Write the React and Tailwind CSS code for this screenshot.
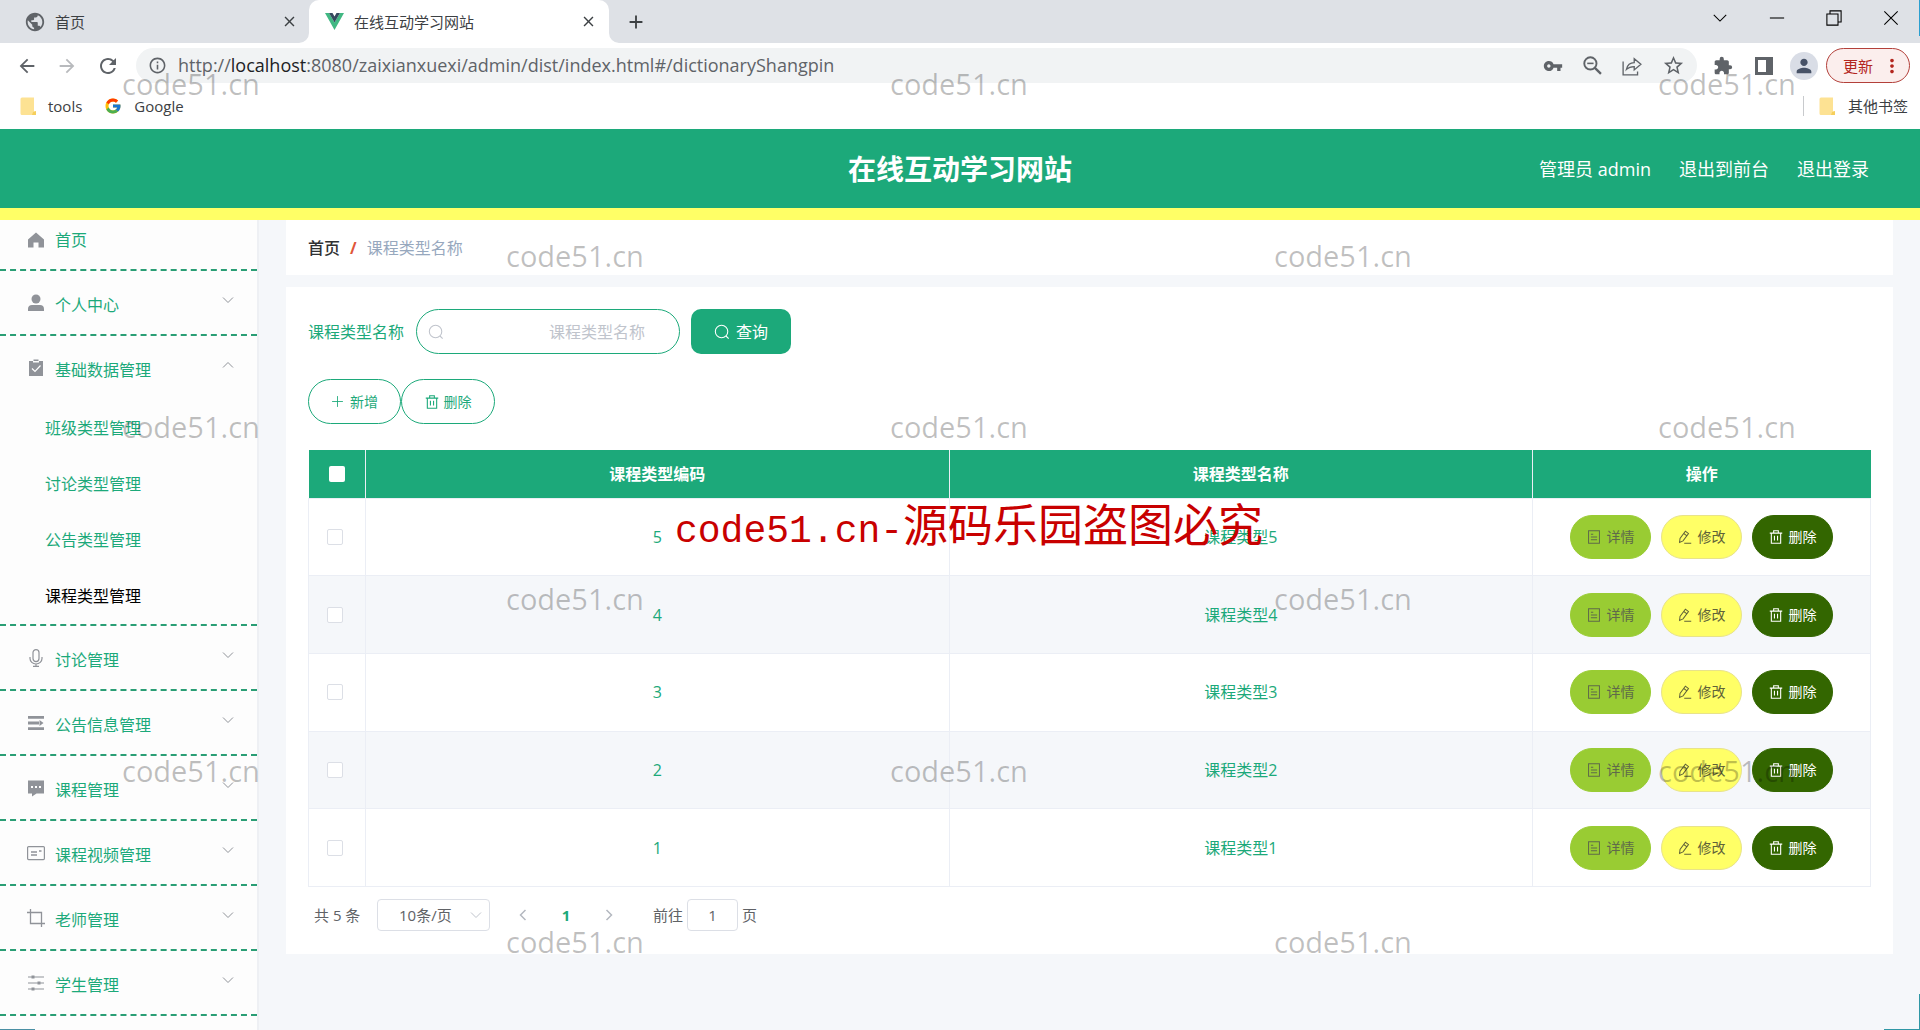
import React from 'react';
import {
  MdPublic, MdArrowBack, MdArrowForward, MdRefresh, MdInfoOutline, MdVpnKey,
  MdStarBorder, MdExtension, MdPerson, MdMoreVert, MdClose, MdAdd,
} from 'react-icons/md';
import { FcGoogle } from 'react-icons/fc';

const Svg = ({ size = 18, children, className = '' }) => (
  <svg width={size} height={size} viewBox="0 0 18 18" fill="none" stroke="currentColor" strokeWidth="1.2" className={`shrink-0 ${className}`}>
    {children}
  </svg>
);

// Sidebar icons
const icons = {
  home: <path d="M9 1.500 1 8.500v8h5.500v-5h5v5H17v-8z" fill="currentColor" stroke="none" />,
  user: (
    <g fill="currentColor" stroke="none">
      <circle cx="9" cy="5" r="4.500" />
      <path d="M1 17v-2c0-2.500 1.500-4 4-4h8c2.500 0 4 1.500 4 4v2z" />
    </g>
  ),
  claim: (
    <>
      <path d="M2 2h4v1.500h6V2h4v15H2zM6.500.5h5V2h-5z" fill="currentColor" stroke="none" />
      <path d="M5 9.500l3 3 5.500-6" stroke="white" />
    </>
  ),
  mic: (
    <>
      <rect x="6" y="0.600" width="6" height="12" rx="3" />
      <path d="M3 8v1.500a6 5.500 0 0 0 12 0V8M9 15v2.500M6 17.400h6" />
    </>
  ),
  unfold: (
    <path d="M1 2h16v2.800H1zM1 7.600h11v2.800H1zM1 13.200h16V16H1zM12.500 6l4 3-4 3z" fill="currentColor" stroke="none" />
  ),
  comment: (
    <>
      <path d="M1 1.500h16v13H9.500L5 17.500v-3H1z" fill="currentColor" stroke="none" />
      <path d="M4 8h2M8 8h2M12 8h2" stroke="white" strokeWidth="2" />
    </>
  ),
  postcard: (
    <>
      <rect x="0.600" y="2.600" width="16.800" height="13" rx="1" />
      <path d="M4 8h6M4 11h6M12 7h2.500" strokeWidth="1.500" />
    </>
  ),
  crop: <path d="M3.500 0v14.500H18M0 3.500h14.500V18" strokeWidth="1.300" />,
  operation: (
    <>
      <path d="M1 3h16M1 9h16M1 15h16" />
      <path d="M6 1.500v3M12 7.500v3M6 13.500v3" strokeWidth="3" />
    </>
  ),
};

const menu = [
  { label: '个人中心', icon: 'user' },
  {
    label: '基础数据管理',
    icon: 'claim',
    children: ['班级类型管理', '讨论类型管理', '公告类型管理', '课程类型管理'],
  },
  { label: '讨论管理', icon: 'mic' },
  { label: '公告信息管理', icon: 'unfold' },
  { label: '课程管理', icon: 'comment' },
  { label: '课程视频管理', icon: 'postcard' },
  { label: '老师管理', icon: 'crop' },
  { label: '学生管理', icon: 'operation' },
];

const rows = [5, 4, 3, 2, 1];

const Chevron = ({ up, className = '' }) => (
  <svg width="12" height="8" viewBox="0 0 12 8" fill="none" stroke="currentColor" className={className}>
    <path d={up ? 'M1 6.500l5-5 5 5' : 'M1 1.500l5 5 5-5'} />
  </svg>
);

const SearchIcon = () => (
  <Svg size={16}>
    <circle cx="8.500" cy="8.500" r="7" />
    <path d="M13.500 13.500l3 3" />
  </Svg>
);

const TrashIcon = () => (
  <Svg size={14}>
    <path d="M1 4h16M3 4v13h12V4M6 4V1h6v3M7 7.500v6M11 7.500v6" strokeWidth="1.400" />
  </Svg>
);

const DocIcon = () => (
  <Svg size={14}>
    <path d="M2 1h14v16H2zM5 5.500h3M5 9h8M5 12.500h8" strokeWidth="1.300" />
  </Svg>
);

const EditIcon = () => (
  <Svg size={14}>
    <path d="M2 16l.6-5L9.500 1.500l4 3L6.500 14zM7.500 4.500l4 3M8 17h9" strokeWidth="1.300" />
  </Svg>
);

const FolderIcon = () => (
  <svg width="17" height="19" viewBox="0 0 17 19" className="shrink-0">
    <path d="M2 .5h12v14h2v3.500H2a1.500 1.500 0 0 1-1.500-1.500V2A1.500 1.500 0 0 1 2 .5" fill="#fde293" />
    <path d="M13 15l3-1v4h-4z" fill="#f6cf5c" />
  </svg>
);

const BrowserChrome = () => (
  <div className="bg-white text-[#3c4043]">
    {/* Tab strip */}
    <div className="flex h-[43px] items-stretch bg-[#dee1e6]">
      <div className="flex w-[309px] items-center pl-6 pr-[11px]">
        <MdPublic size={22} className="text-[#5f6368]" />
        <span className="ml-[9px] flex-1 text-[15px]">首页</span>
        <button aria-label="关闭首页"><MdClose size={17} /></button>
      </div>
      <div className="relative flex w-[300px] items-center rounded-t-[10px] bg-white pl-4 pr-3">
        <svg width="10" height="10" className="absolute -left-[10px] bottom-0"><path d="M10 0v10H0A10 10 0 0 0 10 0" fill="white" /></svg>
        <svg width="10" height="10" className="absolute -right-[10px] bottom-0"><path d="M0 0v10h10A10 10 0 0 1 0 0" fill="white" /></svg>
        <svg width="19" height="17" viewBox="0 0 19 17">
          <path d="M0 0h4l5.500 9.500L15 0h4L9.500 17z" fill="#41b883" />
          <path d="M4 0h3.500l2 3.500 2-3.500H15L9.500 9.500z" fill="#35495e" />
        </svg>
        <span className="ml-[10px] flex-1 text-[15px]">在线互动学习网站</span>
        <button aria-label="关闭标签页"><MdClose size={17} /></button>
      </div>
      <button aria-label="新标签页" className="ml-4 flex items-center"><MdAdd size={22} /></button>
      <div className="ml-auto flex items-start gap-[41px] pr-[21px] pt-[10px] text-black">
        <Svg size={16}><path d="M2 5.500l7 7 7-7" /></Svg>
        <Svg size={16}><path d="M1 9h16" /></Svg>
        <Svg size={16}><path d="M1 4.500h12.500V17H1zM4.500 4.500V1H17v12.500h-3.500" /></Svg>
        <Svg size={16}><path d="M1.500 1.500l15 15M16.500 1.500l-15 15" /></Svg>
      </div>
    </div>

    {/* Address bar */}
    <div className="flex h-[45px] items-center pl-4 pr-[10px] text-[#5f6368]">
      <div className="flex w-[120px] shrink-0 items-center gap-[18px]">
        <button aria-label="后退"><MdArrowBack size={22} /></button>
        <button aria-label="前进" className="text-[#b8babd]"><MdArrowForward size={22} /></button>
        <button aria-label="刷新"><MdRefresh size={24} /></button>
      </div>
      <div className="flex h-[35px] flex-1 items-center rounded-full bg-[#f1f3f4] pl-3 pr-3">
        <MdInfoOutline size={19} />
        <p className="ml-[11px] flex-1 pb-[2px] text-[18px] leading-6">
          http://<span className="text-[#202124]">localhost</span>:8080/zaixianxuexi/admin/dist/index.html#/dictionaryShangpin
        </p>
        <div className="flex items-center gap-5">
          <MdVpnKey size={20} />
          <Svg size={19}>
            <circle cx="7" cy="7" r="5.800" strokeWidth="1.800" />
            <path d="M4 7h6" strokeWidth="1.500" />
            <path d="M11 11l6 6" strokeWidth="2.200" />
          </Svg>
          <Svg size={20}>
            <path d="M1 5v12h13v-3M4 12c1-4.500 4-6 7-6V2.500l6 5-6 5V9.500c-3 0-5 .5-7 2.500z" />
          </Svg>
          <MdStarBorder size={23} />
        </div>
      </div>
      <div className="flex items-center">
        <MdExtension size={20} className="ml-4" />
        <svg width="18" height="18" className="ml-[22px]"><path d="M1.500 1.500h15v15h-15z" fill="none" stroke="currentColor" strokeWidth="3" /><path d="M11 1h6v16h-6z" fill="currentColor" /></svg>
        <span className="ml-[17px] flex size-7 items-center justify-center rounded-full bg-[#d9dde6] text-[#475267]"><MdPerson size={22} /></span>
        <button className="ml-2 flex h-[35px] w-[84px] items-center rounded-full border border-[#b3403a] bg-[#fbeeed] pl-4 text-[15px] text-[#b3261e]">
          更新
          <MdMoreVert size={22} className="ml-2" />
        </button>
      </div>
    </div>

    {/* Bookmarks */}
    <div className="flex h-[41px] items-center pb-[5px] pl-5 pr-3 text-[15px]">
      <FolderIcon />
      <a href="#tools" className="ml-[11px]">tools</a>
      <FcGoogle size={18} className="ml-[22px]" />
      <a href="#google" className="ml-3">Google</a>
      <span className="ml-auto h-5 w-px bg-[#c8cacd]" />
      <span className="ml-[15px] flex items-center gap-3"><FolderIcon /><a href="#other">其他书签</a></span>
    </div>
  </div>
);

const MenuRow = ({ label, icon, open }) => (
  <a href="#menu" className="flex h-[63px] items-center pl-[27px] pr-[23px]">
    <Svg className="text-[#909399]">{icons[icon]}</Svg>
    <span className="ml-[10px] flex-1 pt-1 leading-6">{label}</span>
    <Chevron up={open} className="mb-[6px] text-[#909399]" />
  </a>
);

const Sidebar = () => (
  <nav className="w-[259px] shrink-0 border-r-2 border-[#eef0f4] bg-[#fdfdfd] text-[#1ca97a]">
    <a href="#home" className="flex h-[51px] items-start border-b-2 border-dashed border-[#2a9e75] pl-[27px] pt-2">
      <Svg className="mt-[3px] text-[#909399]">{icons.home}</Svg>
      <span className="ml-[10px] leading-6">首页</span>
    </a>
    {menu.map((item) => (
      <div key={item.label} className="border-b-2 border-dashed border-[#2a9e75]">
        <MenuRow label={item.label} icon={item.icon} open={!!item.children} />
        {item.children && (
          <ul className="pt-px">
            {item.children.map((child) => (
              <li key={child}>
                <a href="#sub" className={`flex h-14 items-center pl-[45px] ${child === '课程类型管理' ? 'text-black' : ''}`}>{child}</a>
              </li>
            ))}
          </ul>
        )}
      </div>
    ))}
  </nav>
);

const ActionButton = ({ className, children }) => (
  <button className={`flex h-11 w-[81px] items-center justify-center gap-[6px] rounded-full border text-[14px] leading-5 ${className}`}>
    {children}
  </button>
);

const DataTable = () => (
  <table className="mt-[26px] h-[437px] w-full table-fixed border-collapse text-center text-[#1ca97a]">
    <thead>
      <tr className="h-12 bg-[#1ca97a] text-white">
        <th className="w-[57px] border-r border-[#ebeef5]">
          <input type="checkbox" aria-label="全选" className="block mx-auto size-4 appearance-none rounded-[2px] bg-white" />
        </th>
        <th className="border-r border-[#ebeef5] font-bold">课程类型编码</th>
        <th className="border-r border-[#ebeef5] font-bold">课程类型名称</th>
        <th className="w-[338px] font-bold">操作</th>
      </tr>
    </thead>
    <tbody>
      {rows.map((n) => (
        <tr key={n} className="even:bg-[#f5f7fa]">
          <td className="border border-[#ebeef5] pr-1">
            <input type="checkbox" aria-label={`选择 ${n}`} className="block mx-auto size-4 appearance-none rounded-[2px] border border-[#dcdfe6] bg-white" />
          </td>
          <td className="border border-[#ebeef5]">{n}</td>
          <td className="border border-[#ebeef5]">课程类型{n}</td>
          <td className="border border-[#ebeef5]">
            <div className="flex justify-center gap-[10px]">
              <ActionButton className="border-[#99cc33] bg-[#99cc33] text-[#5f6a4a]"><DocIcon />详情</ActionButton>
              <ActionButton className="border-[#e8e38a] bg-[#ffff66] text-[#606239]"><EditIcon />修改</ActionButton>
              <ActionButton className="border-[#336600] bg-[#336600] text-white"><TrashIcon />删除</ActionButton>
            </div>
          </td>
        </tr>
      ))}
    </tbody>
  </table>
);

const Pagination = () => (
  <div className="mt-3 flex h-8 items-center pl-[6px] text-[15px] text-[#606266]">
    <span className="w-[63px]">共 5 条</span>
    <div className="relative">
      <select aria-label="每页条数" className="h-8 w-[113px] appearance-none rounded-[4px] border border-[#dcdfe6] bg-white pl-[21px]">
        <option>10条/页</option>
      </select>
      <Chevron className="pointer-events-none absolute right-2 top-3 text-[#c0c4cc]" />
    </div>
    <button aria-label="上一页" className="ml-6 text-[#b4b8c0]"><Svg><path d="M11.500 4l-5 5 5 5" strokeWidth="1.500" /></Svg></button>
    <button className="w-[68px] text-center font-bold text-[#1ca97a]">1</button>
    <button aria-label="下一页" className="text-[#b4b8c0]"><Svg><path d="M6.500 4l5 5-5 5" strokeWidth="1.500" /></Svg></button>
    <label className="ml-[35px] flex items-center gap-1">
      前往
      <input type="text" defaultValue="1" className="h-8 w-[51px] rounded-[4px] border border-[#dcdfe6] text-center" />
      <span>页</span>
    </label>
  </div>
);

const marks = [
  'left-[122px] top-[64px]', 'left-[890px] top-[64px]', 'left-[1658px] top-[64px]',
  'left-[506px] top-[236px]', 'left-[1274px] top-[236px]',
  'left-[122px] top-[407px]', 'left-[890px] top-[407px]', 'left-[1658px] top-[407px]',
  'left-[506px] top-[579px]', 'left-[1274px] top-[579px]',
  'left-[122px] top-[751px]', 'left-[890px] top-[751px]', 'left-[1658px] top-[751px]',
  'left-[506px] top-[922px]', 'left-[1274px] top-[922px]',
];

const Watermarks = () => (
  <div className="pointer-events-none absolute inset-0 overflow-hidden">
    {marks.map((pos) => (
      <span key={pos} className={`absolute text-[29px] leading-10 text-black/25 ${pos}`}>code51.cn</span>
    ))}
    <p className="absolute left-[675px] top-[500px] flex items-baseline whitespace-pre text-[45px] leading-[50px] text-[#c80000]">
      <span className="font-['Liberation_Mono',monospace] text-[38px]">code51.cn-</span>
      源码乐园盗图必究
    </p>
    {/* Desktop showing past the window edges */}
    <span className="absolute right-0 top-0 h-9 w-px bg-[#2b9fd0]" />
    <span className="absolute bottom-0 left-0 h-px w-[35px] bg-[#4a90a4]" />
    <span className="absolute bottom-0 right-0 h-9 w-9 border-b border-r border-[#2f97a5]" />
  </div>
);

export default function App() {
  return (
    <div className="relative flex min-h-screen flex-col bg-[#f5f7fa] font-['Open_Sans','Noto_Sans_CJK_SC',sans-serif] text-[16px] leading-6">
      <BrowserChrome />

      <header className="grid h-[91px] grid-cols-[1fr_auto_1fr] items-center border-b-[12px] border-[#ffff66] bg-[#1ca97a] text-white">
        <h1 className="col-start-2 text-[28px] font-bold leading-10">在线互动学习网站</h1>
        <div className="flex justify-end gap-7 pr-[51px] text-[18px]">
          <span>管理员 admin</span>
          <a href="#front">退出到前台</a>
          <a href="#logout">退出登录</a>
        </div>
      </header>

      <div className="flex flex-1">
        <Sidebar />
        <main className="min-w-0 flex-1 pl-[27px] pr-[27px]">
          <div className="flex h-[55px] items-center bg-white pl-[22px]">
            <a href="#home" className="font-medium text-[#303133]">首页</a>
            <span className="mx-[10px] font-bold text-[#e0563a]">/</span>
            <span className="text-[#97a8be]">课程类型名称</span>
          </div>

          <section className="mt-3 bg-white px-[22px] pb-[23px] pt-[22px]">
            <form className="flex items-center" onSubmit={(e) => e.preventDefault()}>
              <label htmlFor="typeName" className="text-[#1ca97a]">课程类型名称</label>
              <div className="relative ml-3 flex items-center">
                <span className="absolute left-3 text-[#c0c4cc]"><SearchIcon /></span>
                <input id="typeName" placeholder="课程类型名称" className="h-[45px] w-[264px] rounded-full border border-[#1ca97a] pl-8 pr-[34px] text-right placeholder:text-[#c0c4cc]" />
              </div>
              <button className="ml-[11px] flex h-[45px] w-[100px] items-center justify-center gap-[6px] rounded-[10px] bg-[#1ca97a] text-white">
                <SearchIcon />查询
              </button>
            </form>

            <div className="mt-[25px] flex text-[14px] text-[#1ca97a]">
              <button className="flex h-[45px] w-[93px] items-center justify-center gap-[6px] rounded-full border border-[#1ca97a]">
                <Svg size={13}><path d="M9 1.500v15M1.500 9h15" /></Svg>新增
              </button>
              <button className="flex h-[45px] w-[94px] items-center justify-center gap-[5px] rounded-full border border-[#1ca97a]">
                <TrashIcon />删除
              </button>
            </div>

            <DataTable />
            <Pagination />
          </section>
        </main>
      </div>

      <Watermarks />
    </div>
  );
}
